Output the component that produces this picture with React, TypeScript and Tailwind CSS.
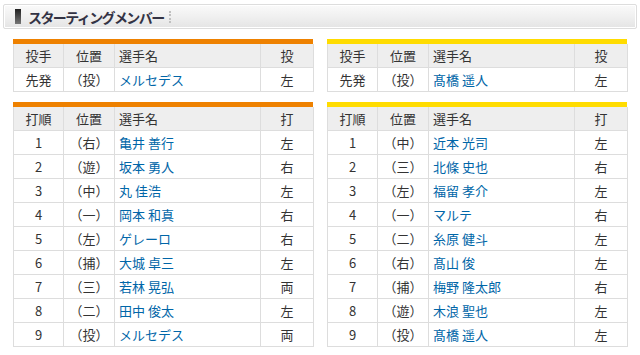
import React from 'react';

interface Row {
  order: string;
  pos: string;
  name: string;
  hand: string;
}

const font = { fontFamily: '"Noto Sans CJK JP", "Noto Sans", sans-serif' };

const leftPitcher: Row = { order: '先発', pos: '（投）', name: 'メルセデス', hand: '左' };
const rightPitcher: Row = { order: '先発', pos: '（投）', name: '髙橋 遥人', hand: '左' };

const leftBatters: Row[] = [
  { order: '1', pos: '（右）', name: '亀井 善行', hand: '左' },
  { order: '2', pos: '（遊）', name: '坂本 勇人', hand: '右' },
  { order: '3', pos: '（中）', name: '丸 佳浩', hand: '左' },
  { order: '4', pos: '（一）', name: '岡本 和真', hand: '右' },
  { order: '5', pos: '（左）', name: 'ゲレーロ', hand: '右' },
  { order: '6', pos: '（捕）', name: '大城 卓三', hand: '左' },
  { order: '7', pos: '（三）', name: '若林 晃弘', hand: '両' },
  { order: '8', pos: '（二）', name: '田中 俊太', hand: '左' },
  { order: '9', pos: '（投）', name: 'メルセデス', hand: '両' },
];

const rightBatters: Row[] = [
  { order: '1', pos: '（中）', name: '近本 光司', hand: '左' },
  { order: '2', pos: '（三）', name: '北條 史也', hand: '右' },
  { order: '3', pos: '（左）', name: '福留 孝介', hand: '左' },
  { order: '4', pos: '（一）', name: 'マルテ', hand: '右' },
  { order: '5', pos: '（二）', name: '糸原 健斗', hand: '左' },
  { order: '6', pos: '（右）', name: '髙山 俊', hand: '左' },
  { order: '7', pos: '（捕）', name: '梅野 隆太郎', hand: '右' },
  { order: '8', pos: '（遊）', name: '木浪 聖也', hand: '左' },
  { order: '9', pos: '（投）', name: '髙橋 遥人', hand: '左' },
];

function LineupTable({
  head,
  rows,
  bar,
}: {
  head: [string, string, string, string];
  rows: Row[];
  bar: string;
}) {
  const cell = 'border border-[#dddddd] h-[23px] p-0 leading-[23px]';
  return (
    <div className="w-[300px]">
      <div className={`h-[5px] ${bar}`} />
      <table className="w-[300px] border-collapse table-fixed text-[13px] text-[#333333]">
        <colgroup>
          <col className="w-[50px]" />
          <col className="w-[51px]" />
          <col className="w-[146px]" />
          <col className="w-[53px]" />
        </colgroup>
        <thead>
          <tr className="bg-[#eeeeee]">
            <th className={`${cell} font-normal text-center border-t-0`}>{head[0]}</th>
            <th className={`${cell} font-normal text-center border-t-0`}>{head[1]}</th>
            <th className={`${cell} font-normal text-left pl-[4px] border-t-0`}>{head[2]}</th>
            <th className={`${cell} font-normal text-center border-t-0`}>{head[3]}</th>
          </tr>
        </thead>
        <tbody>
          {rows.map((r) => (
            <tr key={r.order + r.name} className="bg-white">
              <td className={`${cell} text-center`}>{r.order}</td>
              <td className={`${cell} text-center`}>{r.pos}</td>
              <td className={`${cell} text-left pl-[4px]`}>
                <a href="#" className="text-[#0066a8] no-underline">
                  {r.name}
                </a>
              </td>
              <td className={`${cell} text-center`}>{r.hand}</td>
            </tr>
          ))}
        </tbody>
      </table>
    </div>
  );
}

export default function App() {
  return (
    <div className="w-[640px] h-[355px] bg-white pt-[4px] px-[3px]" style={font}>
      <div className="h-[25px] rounded-[2px] border border-[#dddddd] bg-gradient-to-b from-[#fafafa] via-[#f0f0f0] to-[#e4e4e4] flex items-center pl-[11px] shadow-[inset_0_0_0_1px_#ffffff]">
        <div className="w-[6px] h-[15px] bg-gradient-to-b from-[#222222] to-[#777777]" />
        <h2 className="ml-[7px] text-[14px] font-bold text-[#333344] tracking-[-1.6px] leading-none">
          スターティングメンバー
        </h2>
        <div className="ml-[5px] h-[12px] border-l-2 border-dotted border-[#c0c0c0]" />
      </div>

      <div className="flex justify-between px-[10px] mt-[10px]">
        <div className="flex flex-col gap-[10px]">
          <LineupTable head={['投手', '位置', '選手名', '投']} rows={[leftPitcher]} bar="bg-[#ee8100]" />
          <LineupTable head={['打順', '位置', '選手名', '打']} rows={leftBatters} bar="bg-[#ee8100]" />
        </div>
        <div className="flex flex-col gap-[10px]">
          <LineupTable head={['投手', '位置', '選手名', '投']} rows={[rightPitcher]} bar="bg-[#ffdc00]" />
          <LineupTable head={['打順', '位置', '選手名', '打']} rows={rightBatters} bar="bg-[#ffdc00]" />
        </div>
      </div>
    </div>
  );
}
